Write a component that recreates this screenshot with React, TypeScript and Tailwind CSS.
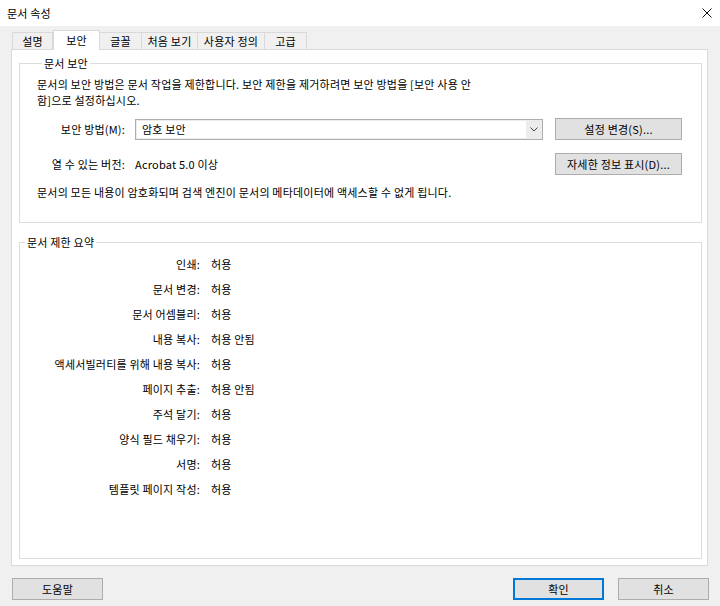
import React from 'react';

const tabs = [
  { label: '설명', w: 'w-[41px]' },
  { label: '보안', w: 'w-[47px]', active: true },
  { label: '글꼴', w: 'w-[42px]' },
  { label: '처음 보기', w: 'w-[56px]' },
  { label: '사용자 정의', w: 'w-[67px]' },
  { label: '고급', w: 'w-[42px]' },
];

const summary = [
  ['인쇄:', '허용'],
  ['문서 변경:', '허용'],
  ['문서 어셈블리:', '허용'],
  ['내용 복사:', '허용 안됨'],
  ['액세서빌러티를 위해 내용 복사:', '허용'],
  ['페이지 추출:', '허용 안됨'],
  ['주석 달기:', '허용'],
  ['양식 필드 채우기:', '허용'],
  ['서명:', '허용'],
  ['템플릿 페이지 작성:', '허용'],
];

const Button: React.FC<{ label: string; className?: string; primary?: boolean }> = ({ label, className = '', primary }) => (
  <div
    className={`h-[22px] flex items-center justify-center bg-[#e1e1e1] ${
      primary ? 'border-2 border-[#0078d7]' : 'border border-[#adadad]'
    } ${className}`}
  >
    {label}
  </div>
);

const App: React.FC = () => {
  return (
    <div
      className="w-[720px] h-[606px] bg-[#f0f0f0] flex flex-col text-[11px] leading-[16px] tracking-[0.2px] text-black overflow-hidden"
      style={{ fontFamily: '"Noto Sans CJK KR", "Noto Sans", sans-serif' }}
    >
      {/* title bar */}
      <div className="h-[26px] bg-white flex items-center justify-between pl-[7px] pr-[8px]">
        <span>문서 속성</span>
        <svg width="10" height="10" viewBox="0 0 10 10">
          <path d="M0.5 0.5 L9.5 9.5 M9.5 0.5 L0.5 9.5" stroke="#111" strokeWidth="1" />
        </svg>
      </div>

      {/* tabs */}
      <div className="mt-[4px] ml-[12px] h-[19px] flex items-end">
        {tabs.map((t, i) =>
          t.active ? (
            <div
              key={t.label}
              className={`${t.w} h-[20px] -mb-px relative z-10 bg-white border-t border-x border-[#d9d9d9] flex items-center justify-center pb-[2px]`}
            >
              {t.label}
            </div>
          ) : (
            <div
              key={t.label}
              className={`${t.w} h-[17px] bg-[#f0f0f0] border-t border-r border-[#d9d9d9] ${
                i === 0 ? 'border-l' : ''
              } flex items-center justify-center`}
            >
              {t.label}
            </div>
          )
        )}
      </div>

      {/* tab panel */}
      <div className="ml-[11px] w-[697px] h-[517px] bg-white border border-[#d9d9d9] flex flex-col">
        <fieldset className="mt-[5px] ml-[7px] w-[683px] h-[168px] border border-[#dcdcdc] pl-[17px]">
          <legend className="ml-[5px] px-[2px] leading-[16px]">문서 보안</legend>
          <p className="mt-[5px]">
            문서의 보안 방법은 문서 작업을 제한합니다. 보안 제한을 제거하려면 보안 방법을 [보안 사용 안
            <br />
            함]으로 설정하십시오.
          </p>

          <div className="mt-[10px] h-[22px] flex items-center">
            <div className="w-[88px] text-right">보안 방법(M):</div>
            <div className="ml-[10px] w-[408px] h-[21px] border border-[#adadad] bg-[#ececec] flex">
              <div className="flex-1 m-[1px] mr-0 bg-white flex items-center pl-[5px]">암호 보안</div>
              <div className="w-[16px] flex items-center justify-center">
                <svg width="8" height="5" viewBox="0 0 8 5">
                  <polyline points="0.5,0.5 4,4 7.5,0.5" fill="none" stroke="#444" strokeWidth="1" />
                </svg>
              </div>
            </div>
            <Button label="설정 변경(S)..." className="ml-[12px] w-[127px]" />
          </div>

          <div className="mt-[13px] h-[22px] flex items-center">
            <div className="w-[88px] text-right">열 수 있는 버전:</div>
            <div className="ml-[10px] w-[408px]">Acrobat 5.0 이상</div>
            <Button label="자세한 정보 표시(D)..." className="ml-[12px] w-[127px]" />
          </div>

          <p className="mt-[9px]">문서의 모든 내용이 암호화되며 검색 엔진이 문서의 메타데이터에 액세스할 수 없게 됩니다.</p>
        </fieldset>

        <fieldset className="mt-[11px] ml-[7px] w-[683px] h-[325px] border border-[#dcdcdc]">
          <legend className="ml-[5px] px-[2px] leading-[16px]">문서 제한 요약</legend>
          <div className="mt-[1px] flex flex-col">
            {summary.map(([k, v]) => (
              <div key={k} className="h-[25px] flex items-center">
                <div className="w-[180px] text-right">{k}</div>
                <div className="ml-[11px]">{v}</div>
              </div>
            ))}
          </div>
        </fieldset>
      </div>

      {/* footer */}
      <div className="mt-[12px] flex items-center">
        <Button label="도움말" className="ml-[12px] w-[91px]" />
        <Button label="확인" primary className="ml-auto w-[91px]" />
        <Button label="취소" className="ml-[14px] mr-[11px] w-[91px]" />
      </div>
    </div>
  );
};

export default App;
